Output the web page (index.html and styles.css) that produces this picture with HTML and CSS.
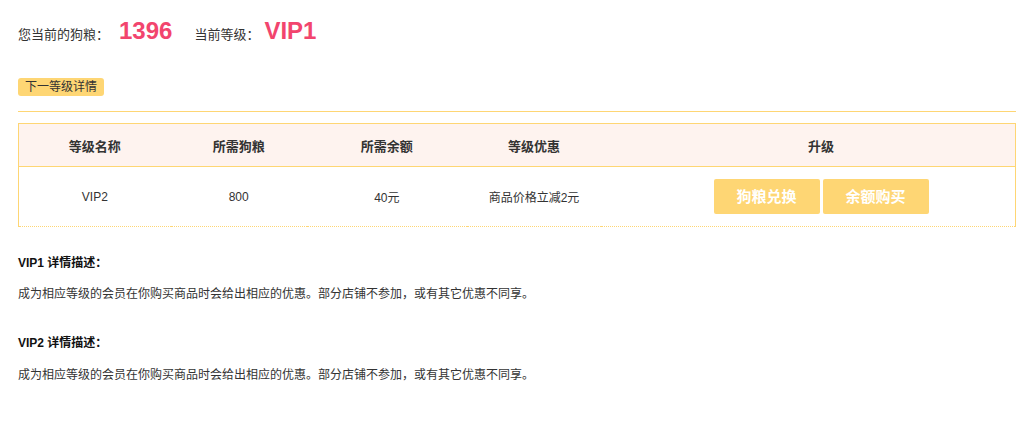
FILE: index.html
```html
<!DOCTYPE html>
<html lang="zh-CN">
<head>
<meta charset="utf-8">
<title>等级</title>
<link rel="stylesheet" href="styles.css">
</head>
<body>
<div class="page">
  <div class="summary">
    <span class="label">您当前的狗粮：</span>
    <span class="value value-food">1396</span>
    <span class="label">当前等级：</span>
    <span class="value value-level">VIP1</span>
  </div>
  <div class="next">
    <span class="next-btn">下一等级详情</span>
  </div>
  <div class="divider"></div>
  <table class="levels">
    <colgroup>
      <col class="c1"><col class="c2"><col class="c3"><col class="c4"><col class="c5">
    </colgroup>
    <thead>
      <tr>
        <th>等级名称</th>
        <th>所需狗粮</th>
        <th>所需余额</th>
        <th>等级优惠</th>
        <th class="up">升级</th>
      </tr>
    </thead>
    <tbody>
      <tr>
        <td>VIP2</td>
        <td>800</td>
        <td>40元</td>
        <td>商品价格立减2元</td>
        <td class="up"><span class="act">狗粮兑换</span><span class="act">余额购买</span></td>
      </tr>
    </tbody>
  </table>
  <div class="desc">
    <h4>VIP1 详情描述：</h4>
    <p>成为相应等级的会员在你购买商品时会给出相应的优惠。部分店铺不参加，或有其它优惠不同享。</p>
  </div>
  <div class="desc">
    <h4>VIP2 详情描述：</h4>
    <p>成为相应等级的会员在你购买商品时会给出相应的优惠。部分店铺不参加，或有其它优惠不同享。</p>
  </div>
</div>
</body>
</html>
```
FILE: styles.css
```css
html, body {
  margin: 0;
  padding: 0;
  background: #fff;
}
body {
  font-family: "Liberation Sans", Arial, "Noto Sans CJK SC", sans-serif;
  color: #333;
  font-size: 12px;
}
.page {
  width: 998px;
  padding-left: 18px;
}
.summary {
  display: flex;
  align-items: baseline;
  height: 28px;
  margin-top: 17px;
}
.label {
  font-size: 13px;
  color: #333;
}
.value {
  font-size: 24px;
  font-weight: bold;
  color: #f2456e;
  margin-left: 10px;
}
.value-food {
  margin-right: 22px;
}
.value-level {
  margin-left: 5px;
}
.next {
  margin-top: 33px;
  display: flex;
}
.next-btn {
  display: inline-block;
  background: #fed674;
  border-radius: 3px;
  padding: 0 7px;
  height: 18px;
  line-height: 18px;
  font-size: 12px;
  color: #333;
}
.divider {
  margin-top: 15px;
  height: 1px;
  background: #fed674;
}
.levels {
  margin-top: 11px;
  width: 998px;
  border-collapse: collapse;
  table-layout: fixed;
  border: 1px solid #fed674;
  border-bottom: 1px dotted #fed674;
}
.c1 { width: 152px; }
.c2 { width: 136px; }
.c3 { width: 160px; }
.c4 { width: 134px; }
.c5 { width: 414px; }
.levels th {
  background: #fef3ef;
  height: 42px;
  padding: 0;
  font-size: 13px;
  font-weight: bold;
  color: #333;
  text-align: center;
  border-bottom: 1px solid #fed674;
}
.levels td {
  height: 59px;
  padding: 0;
  text-align: center;
  font-size: 12px;
  color: #333;
}
.levels .up {
  padding-left: 26px;
}
.act {
  display: inline-block;
  width: 106px;
  height: 35px;
  line-height: 35px;
  background: #fed674;
  border-radius: 2px;
  color: #fff;
  font-size: 15px;
  font-weight: bold;
  margin: 0 1.5px;
  vertical-align: middle;
}
.desc {
  margin-top: 28px;
}
.desc + .desc {
  margin-top: 33px;
}
.desc h4 {
  margin: 0;
  font-size: 12px;
  font-weight: bold;
  color: #111;
  line-height: 16px;
}
.desc p {
  margin: 15px 0 0;
  font-size: 12px;
  color: #333;
  line-height: 16px;
}
.desc + .desc p {
  margin-top: 16px;
}
```
